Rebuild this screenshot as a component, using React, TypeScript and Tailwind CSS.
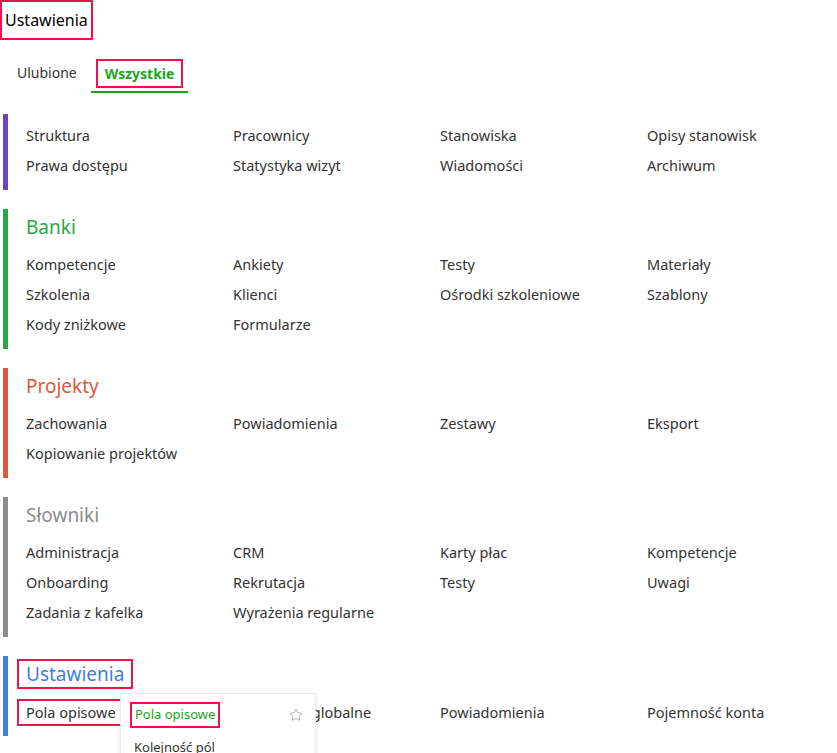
import { FC } from "react";

type Section = {
  title?: string;
  color: string;
  bar: string;
  items: string[];
};

const sections: Section[] = [
  {
    color: "",
    bar: "bg-[#6f42c1]",
    items: [
      "Struktura",
      "Pracownicy",
      "Stanowiska",
      "Opisy stanowisk",
      "Prawa dostępu",
      "Statystyka wizyt",
      "Wiadomości",
      "Archiwum",
    ],
  },
  {
    title: "Banki",
    color: "text-[#28a745]",
    bar: "bg-[#28a745]",
    items: [
      "Kompetencje",
      "Ankiety",
      "Testy",
      "Materiały",
      "Szkolenia",
      "Klienci",
      "Ośrodki szkoleniowe",
      "Szablony",
      "Kody zniżkowe",
      "Formularze",
    ],
  },
  {
    title: "Projekty",
    color: "text-[#e0583a]",
    bar: "bg-[#e0583a]",
    items: [
      "Zachowania",
      "Powiadomienia",
      "Zestawy",
      "Eksport",
      "Kopiowanie projektów",
    ],
  },
  {
    title: "Słowniki",
    color: "text-[#8c8c8c]",
    bar: "bg-[#8c8c8c]",
    items: [
      "Administracja",
      "CRM",
      "Karty płac",
      "Kompetencje",
      "Onboarding",
      "Rekrutacja",
      "Testy",
      "Uwagi",
      "Zadania z kafelka",
      "Wyrażenia regularne",
    ],
  },
];

const Star: FC = () => (
  <svg width="16" height="16" viewBox="0 0 24 24" fill="none" stroke="#b5b5b5" strokeWidth="1.5" strokeLinejoin="round">
    <path d="M12 2.8l2.8 5.8 6.3.9-4.6 4.4 1.1 6.3L12 17.2l-5.6 3 1.1-6.3L2.9 9.5l6.3-.9z" />
  </svg>
);

const SectionBlock: FC<{ s: Section }> = ({ s }) => (
  <div className={`flex ${s.title ? "pt-[4px]" : "pt-[6px]"} pb-[10px] relative`}>
    <div className={`absolute left-[3px] top-0 bottom-0 w-[5px] ${s.bar}`} />
    <div className="pl-[26px]">
      {s.title && (
        <h2 className={`text-[19px] leading-[28px] mb-2 ${s.color}`}>{s.title}</h2>
      )}
      <div className="grid grid-cols-[207px_207px_207px_207px]">
        {s.items.map((it, i) => (
          <div key={i} className="text-[14.5px] leading-[30px] text-[#333] whitespace-nowrap">
            {it}
          </div>
        ))}
      </div>
    </div>
  </div>
);

export default function App() {
  return (
    <div className="w-[837px] h-[753px] overflow-hidden bg-white font-['Noto_Sans',sans-serif]">
      <div className="flex">
        <div className="h-[40px] px-[3px] border-2 border-[#f0124a] flex items-center text-[16px] text-black">
          Ustawienia
        </div>
      </div>
      <div className="flex items-end mt-[19px] ml-[17px] gap-[14px]">
        <div className="text-[14px] text-[#333] pb-[6px] leading-[28px]">Ulubione</div>
        <div className="border-b-2 border-[#1e9e1e] px-[5px] pb-[3px]">
          <div className="border-2 border-[#f0124a] px-[7px] h-[29px] flex items-center text-[14px] font-bold text-[#1ea51e]">
            Wszystkie
          </div>
        </div>
      </div>
      <div className="flex flex-col gap-[19px] mt-[21px]">
        {sections.map((s, i) => (
          <SectionBlock key={i} s={s} />
        ))}
        <div className="flex pt-[3px] pb-[10px] relative">
          <div className="absolute left-[3px] top-0 bottom-0 w-[5px] bg-[#3b7fe0]" />
          <div className="pl-[17px]">
            <div className="flex">
              <h2 className="border-2 border-[#f0124a] px-[7px] h-[30px] flex items-center text-[19px] text-[#3b7fe0]">
                Ustawienia
              </h2>
            </div>
            <div className="grid grid-cols-[216px_207px_207px_207px] mt-[10px] relative">
              <div className="flex">
                <div className="border-2 border-[#f0124a] px-[7px] h-[27px] flex items-center text-[14.5px] text-[#333] whitespace-nowrap">
                  Pola opisowe
                </div>
              </div>
              <div className="text-[14.5px] leading-[27px] text-[#333] whitespace-nowrap">Ustawienia globalne</div>
              <div className="text-[14.5px] leading-[27px] text-[#333] whitespace-nowrap">Powiadomienia</div>
              <div className="text-[14.5px] leading-[27px] text-[#333] whitespace-nowrap">Pojemność konta</div>
              <div className="absolute left-[103px] top-[-6px] w-[196px] bg-white border border-[#ebebeb] shadow-[0_2px_6px_rgba(0,0,0,0.08)] pt-[8px]">
                <div className="flex items-center justify-between pl-[9px] pr-[11px]">
                  <div className="border-2 border-[#f0124a] px-[3px] h-[26px] flex items-center text-[13px] text-[#1ea51e]">
                    Pola opisowe
                  </div>
                  <Star />
                </div>
                <div className="pl-[13px] mt-[6px] text-[13px] leading-[26px] text-[#333]">Kolejność pól</div>
              </div>
            </div>
          </div>
        </div>
      </div>
    </div>
  );
}
